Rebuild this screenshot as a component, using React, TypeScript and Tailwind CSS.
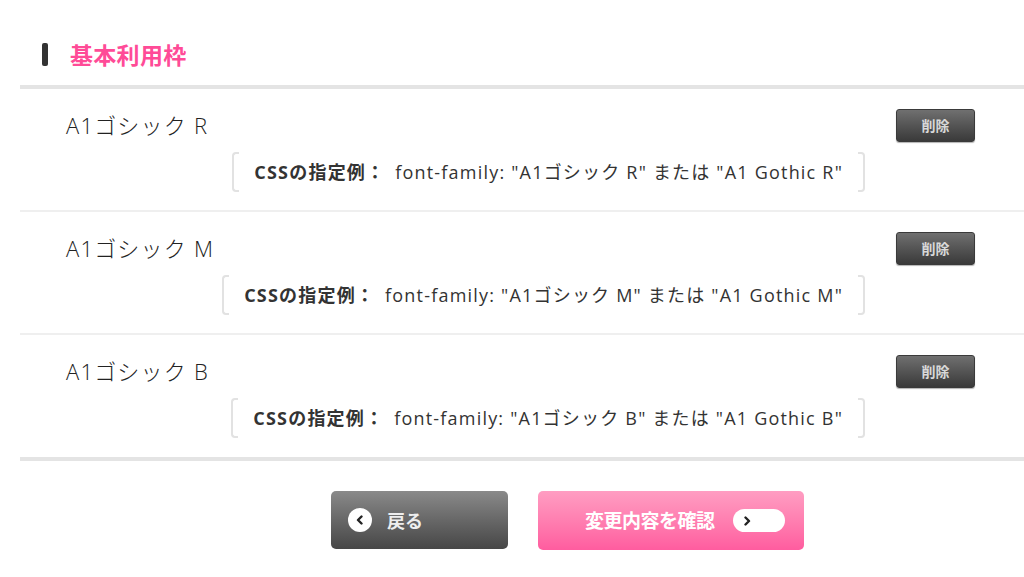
import React from "react"

type Font = {
  name: string
  latin: string
}

const fonts: Font[] = [
  { name: "A1ゴシック R", latin: "A1 Gothic R" },
  { name: "A1ゴシック M", latin: "A1 Gothic M" },
  { name: "A1ゴシック B", latin: "A1 Gothic B" },
]

const jp = "font-['Noto_Sans_CJK_JP','Noto_Sans',sans-serif]"
const mixed = "font-['Open_Sans','Noto_Sans_CJK_JP',sans-serif]"

function Example({ font }: { font: Font }) {
  return (
    <div className="flex items-stretch h-[40px]">
      <span className="w-[7px] border-l-2 border-t-2 border-b-2 border-[#e2e2e2] rounded-l-[4px]" />
      <div className={`flex items-center px-[15px] text-[18px] text-[#333] tracking-[1.2px] ${mixed}`}>
        <span className="font-bold">CSSの指定例：</span>
        <span className="ml-[10px]">
          font-family: "{font.name}" または "{font.latin}"
        </span>
      </div>
      <span className="w-[7px] border-r-2 border-t-2 border-b-2 border-[#e2e2e2] rounded-r-[4px]" />
    </div>
  )
}

function FontRow({ font, last }: { font: Font; last: boolean }) {
  return (
    <div className={last ? "pt-[20px] pb-[19px]" : "pt-[20px] pb-[18px] border-b-2 border-[#efefef]"}>
      <div className="flex items-center justify-between pl-[46px] pr-[140px] h-[33px]">
        <span className={`text-[22px] font-light text-[#222] tracking-[1.2px] ${mixed}`}>{font.name}</span>
        <button className="w-[79px] h-[33px] rounded-[3px] bg-gradient-to-b from-[#707070] to-[#3a3a3a] border border-[#3a3a3a] text-[14px] font-bold text-[#d8d8d8] shadow-[0_1px_1px_rgba(0,0,0,0.3)]">
          削除
        </button>
      </div>
      <div className="flex justify-end pr-[250px] mt-[10px]">
        <Example font={font} />
      </div>
    </div>
  )
}

export default function App() {
  return (
    <div className={`w-[1024px] h-[577px] overflow-hidden bg-white ${jp}`}>
      <div className="flex items-center pt-[43px] pl-[42px]">
        <span className="w-[6px] h-[23px] rounded-[2px] bg-[#333]" />
        <h1 className="ml-[22px] text-[23px] font-bold text-[#ff4b97] leading-[23px] tracking-[0.3px]">基本利用枠</h1>
      </div>

      <div className="ml-[20px] w-[1095px] mt-[19px]">
        <div className="h-[4px] bg-[#e4e4e4]" />
        {fonts.map((f, i) => (
          <FontRow key={f.name} font={f} last={i === fonts.length - 1} />
        ))}
        <div className="h-[4px] bg-[#e4e4e4]" />

        <div className="flex justify-center gap-[30px] mt-[30px]">
          <button className="flex items-center w-[177px] h-[58px] rounded-[5px] bg-gradient-to-b from-[#8a8a8a] to-[#474747] pl-[17px]">
            <span className="flex items-center justify-center w-[24px] h-[24px] rounded-full bg-white">
              <svg width="10" height="10" viewBox="0 0 10 10">
                <path d="M6.5 1.5 L3 5 L6.5 8.5" stroke="#222" strokeWidth="2.4" fill="none" strokeLinecap="round" strokeLinejoin="round" />
              </svg>
            </span>
            <span className="ml-[15px] text-[18px] font-bold text-[#eeeeee]">戻る</span>
          </button>
          <button className="flex items-center w-[266px] h-[59px] rounded-[5px] bg-gradient-to-b from-[#ff9dc2] to-[#ff5c9f] pl-[47px]">
            <span className="text-[19px] font-bold text-white tracking-[-0.5px]">変更内容を確認</span>
            <span className="ml-[18px] flex items-center w-[52px] h-[23px] rounded-full bg-white pl-[9px]">
              <svg width="10" height="10" viewBox="0 0 10 10">
                <path d="M3.5 1.5 L7 5 L3.5 8.5" stroke="#222" strokeWidth="2.4" fill="none" strokeLinecap="round" strokeLinejoin="round" />
              </svg>
            </span>
          </button>
        </div>
      </div>
    </div>
  )
}
